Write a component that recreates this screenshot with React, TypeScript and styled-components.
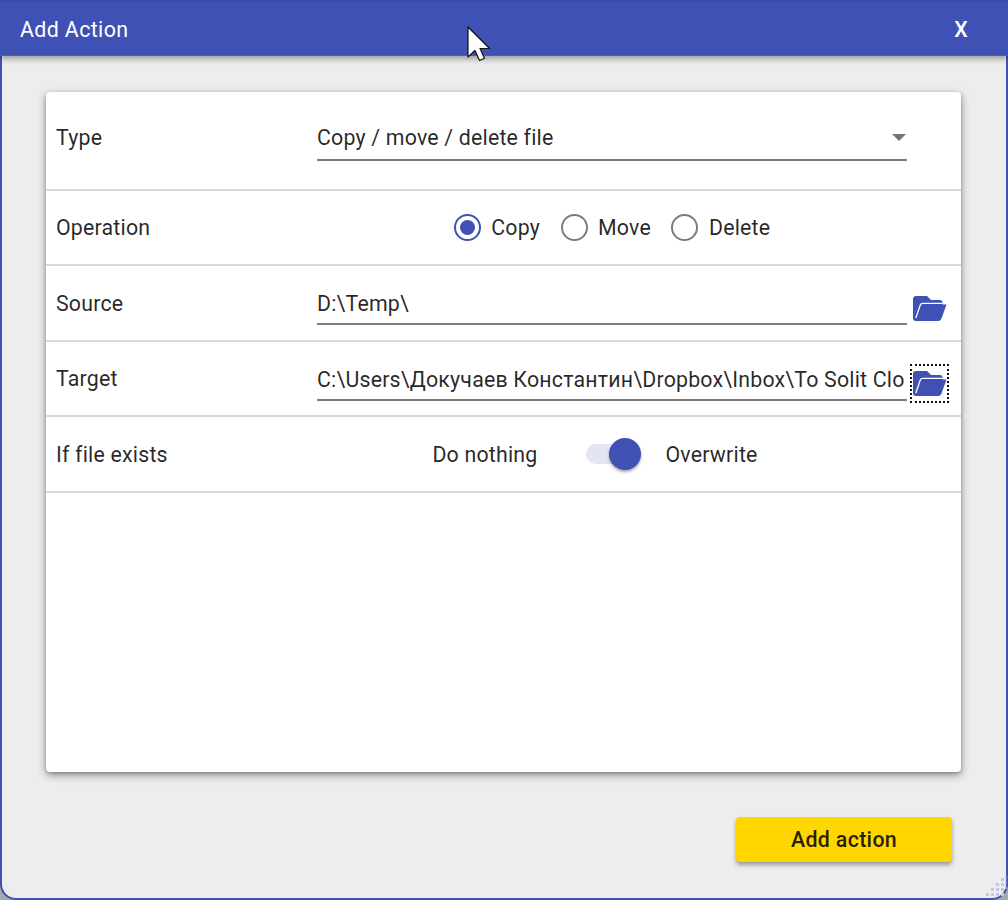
import React from "react";
import styled, { createGlobalStyle } from "styled-components";

const Global = createGlobalStyle`
  html, body { margin: 0; padding: 0; background: #a9a9a9; }
  #root { width: 1008px; height: 900px; overflow: hidden; }
  * { box-sizing: border-box; }
`;

const Win = styled.div`
  position: relative;
  width: 1008px;
  height: 900px;
  display: flex;
  flex-direction: column;
  background: #ededed;
  border: 2px solid #3f51b5;
  border-top: 0;
  border-radius: 0 0 16px 16px;
  font-family: Roboto, "Liberation Sans", sans-serif;
  color: rgba(0, 0, 0, 0.85);
  font-size: 21.33px;
  letter-spacing: 0.2px;
`;

const Header = styled.header`
  height: 56px;
  margin: 0 -2px;
  padding: 0 40px 0 20px;
  display: flex;
  align-items: center;
  justify-content: space-between;
  background: #3f51b5;
  border-top: 2px solid #3949a8;
  border-bottom: 1px solid #4a5cc0;
  box-shadow: 0 3px 6px rgba(0, 0, 0, 0.35);
  color: #fff;
  flex: none;
  z-index: 1;
`;

const Title = styled.span`
  letter-spacing: 0.4px;
  margin-top: 2px;
`;

const Close = styled.span`
  font-weight: 500;
  margin-top: 2px;
`;

const Card = styled.main`
  margin: 36px 45px 0 44px;
  height: 680px;
  background: #fff;
  border-radius: 4px;
  box-shadow: 0 3px 8px rgba(0, 0, 0, 0.42), 0 1px 3px rgba(0, 0, 0, 0.2);
  flex: none;
`;

const Row = styled.div<{ $h: number }>`
  display: grid;
  grid-template-columns: 261px 590px 54px;
  height: ${(p) => p.$h}px;
  padding-left: 10px;
  border-bottom: 2px solid #d9d9d9;
  align-items: center;
`;

const Label = styled.div<{ $up?: number }>`
  padding-bottom: ${(p) => p.$up ?? 0}px;
`;

const Field = styled.div<{ $top?: number; $pb?: number }>`
  height: 37px;
  margin-top: ${(p) => p.$top ?? 7}px;
  padding-bottom: ${(p) => p.$pb ?? 4}px;
  display: flex;
  align-items: center;
  justify-content: space-between;
  border-bottom: 2px solid #7d7d7d;
  white-space: nowrap;
`;

const Arrow = styled.i`
  width: 0;
  height: 0;
  margin-right: 1px;
  border-left: 7.5px solid transparent;
  border-right: 7.5px solid transparent;
  border-top: 7.5px solid #757575;
`;

const Center = styled.div`
  grid-column: 2;
  display: flex;
  align-items: center;
  justify-content: center;
`;

const Radio = styled.label`
  display: flex;
  align-items: center;
  gap: 10.5px;
  margin-right: 20.5px;
  &:last-child { margin-right: 0; }
`;

const Ring = styled.span<{ $on?: boolean }>`
  position: relative;
  width: 27px;
  height: 27px;
  border-radius: 50%;
  border: 2.5px solid ${(p) => (p.$on ? "#3f51b5" : "#7b7b7b")};
  &::after {
    content: "";
    display: ${(p) => (p.$on ? "block" : "none")};
    position: absolute;
    inset: 4px;
    border-radius: 50%;
    background: #3f51b5;
  }
`;

const SwitchRow = styled(Center)`
  padding-right: 34px;
`;

const Track = styled.span`
  position: relative;
  width: 50px;
  height: 20px;
  margin: 0 29px 0 49px;
  border-radius: 10px;
  background: #e3e5f3;
`;

const Thumb = styled.span`
  position: absolute;
  top: -6px;
  right: -5px;
  width: 32px;
  height: 32px;
  border-radius: 50%;
  background: #3f51b5;
  box-shadow: 0 2px 3px rgba(0, 0, 0, 0.35);
`;

const IconBox = styled.div<{ $focus?: boolean }>`
  width: 37px;
  height: 37px;
  margin: 10px 0 0 4px;
  display: flex;
  align-items: center;
  justify-content: center;
  outline: ${(p) => (p.$focus ? "2px dotted #111" : "none")};
  outline-offset: -1px;
`;

const Footer = styled.footer`
  display: flex;
  justify-content: flex-end;
  padding: 45px 54px 0 0;
`;

const Action = styled.button`
  width: 216px;
  height: 45px;
  border: 0;
  border-radius: 4px;
  background: #ffd600;
  color: rgba(0, 0, 0, 0.87);
  font: 500 21.33px Roboto, sans-serif;
  letter-spacing: 0.35px;
  box-shadow: 0 3px 4px rgba(0, 0, 0, 0.35);
`;

const Overlay = styled.svg<{ $x: number; $y: number }>`
  position: absolute;
  left: ${(p) => p.$x}px;
  top: ${(p) => p.$y}px;
  z-index: 2;
`;

const Folder = () => (
  <svg width="34" height="25" viewBox="0 0 34 25">
    <path
      d="M3 0H14L18 4H27Q29.5 4 29.5 7V8.5H33.5L28.5 22.5Q27.5 25 25 25H3Q0 25 0 22V3Q0 0 3 0Z"
      fill="#3f51b5"
    />
    <path
      d="M29.5 7.3H9.5Q8 7.3 7.3 9L2.8 22"
      fill="none"
      stroke="#fff"
      strokeWidth="1.3"
    />
  </svg>
);

export default function App() {
  return (
    <>
      <Global />
      <Win>
        <Header>
          <Title>Add Action</Title>
          <Close>X</Close>
        </Header>
        <Card>
          <Row $h={99}>
            <Label $up={7}>Type</Label>
            <Field $top={4} $pb={8}>
              Copy / move / delete file
              <Arrow />
            </Field>
          </Row>
          <Row $h={75}>
            <Label $up={1}>Operation</Label>
            <Center>
              <Radio><Ring $on />Copy</Radio>
              <Radio><Ring />Move</Radio>
              <Radio><Ring />Delete</Radio>
            </Center>
          </Row>
          <Row $h={76}>
            <Label>Source</Label>
            <Field>D:\Temp\</Field>
            <IconBox><Folder /></IconBox>
          </Row>
          <Row $h={75}>
            <Label $up={1}>Target</Label>
            <Field>C:\Users\Докучаев Константин\Dropbox\Inbox\To Solit Clo</Field>
            <IconBox $focus><Folder /></IconBox>
          </Row>
          <Row $h={76}>
            <Label>If file exists</Label>
            <SwitchRow>
              Do nothing
              <Track><Thumb /></Track>
              Overwrite
            </SwitchRow>
          </Row>
        </Card>
        <Footer>
          <Action>Add action</Action>
        </Footer>
        <Overlay $x={463} $y={25} width="26" height="38" viewBox="0 0 26 38">
          <path
            d="M3 2v30l7-6.5 4.5 10 5-2.2-4.5-9.8h9.5z"
            fill="#fff"
            stroke="#111"
            strokeWidth="1.2"
            strokeLinejoin="round"
          />
        </Overlay>
        <Overlay $x={982} $y={874} width="24" height="24" viewBox="0 0 24 24">
          <path
            d="M2 19h3v3H2zM7 19h3v3H7zM12 19h3v3h-3zM17 19h3v3h-3zM7 14h3v3H7zM12 14h3v3h-3zM17 14h3v3h-3zM12 9h3v3h-3zM17 9h3v3h-3zM17 4h3v3h-3zM21 2h1.5v3H21zM21 7h1.5v3H21zM21 12h1.5v3H21z"
            fill="#c3c9e8"
          />
        </Overlay>
      </Win>
    </>
  );
}
